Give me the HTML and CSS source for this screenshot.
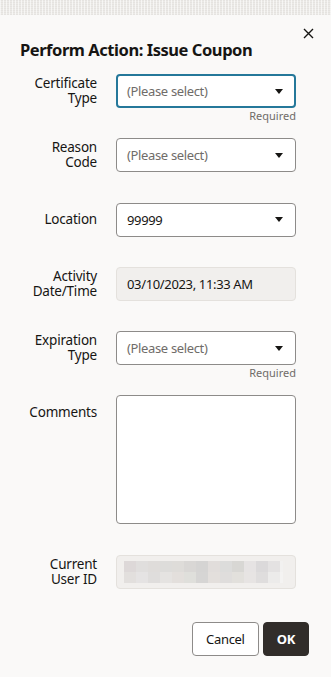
FILE: index.html
```html
<!DOCTYPE html>
<html lang="en">
<head>
<meta charset="UTF-8" />
<meta name="viewport" content="width=device-width, initial-scale=1.0"/>
<title>Perform Action: Issue Coupon</title>
<link rel="stylesheet" href="styles.css">
</head>
<body>

<div class="backdrop"></div>

<div class="dialog">
  <div class="dialog-header">
    <h1>Perform Action: Issue Coupon</h1>
    <button class="close" aria-label="Close">
      <svg width="11" height="11" viewBox="0 0 11 11"><path d="M1 1L10 10M10 1L1 10" stroke="#161513" stroke-width="1.4" fill="none"/></svg>
    </button>
  </div>

  <div class="form">
    <div class="field">
      <label class="field-label">Certificate Type</label>
      <div class="field-control">
        <div class="select focused">
          <span class="placeholder">(Please select)</span>
          <span class="caret"></span>
        </div>
        <div class="help">Required</div>
      </div>
    </div>

    <div class="field">
      <label class="field-label">Reason Code</label>
      <div class="field-control">
        <div class="select">
          <span class="placeholder">(Please select)</span>
          <span class="caret"></span>
        </div>
        <div class="help"></div>
      </div>
    </div>

    <div class="field">
      <label class="field-label">Location</label>
      <div class="field-control">
        <div class="select">
          <span class="value">99999</span>
          <span class="caret"></span>
        </div>
        <div class="help"></div>
      </div>
    </div>

    <div class="field">
      <label class="field-label">Activity Date/Time</label>
      <div class="field-control">
        <div class="readonly">
          <span class="value">03/10/2023, 11:33 AM</span>
        </div>
        <div class="help"></div>
      </div>
    </div>

    <div class="field">
      <label class="field-label">Expiration Type</label>
      <div class="field-control">
        <div class="select">
          <span class="placeholder">(Please select)</span>
          <span class="caret"></span>
        </div>
        <div class="help">Required</div>
      </div>
    </div>

    <div class="field">
      <label class="field-label">Comments</label>
      <div class="field-control">
        <textarea class="textarea"></textarea>
        <div class="help"></div>
      </div>
    </div>

    <div class="field">
      <label class="field-label">Current User ID</label>
      <div class="field-control">
        <div class="readonly">
          <span class="blurred"></span>
        </div>
      </div>
    </div>
  </div>

  <div class="actions">
    <button class="btn">Cancel</button>
    <button class="btn btn-primary">OK</button>
  </div>
</div>

</body>
</html>
```

FILE: styles.css
```css
body {
  margin: 0;
  font-family: "Noto Sans", Arial, sans-serif;
  color: #161513;
  background: #faf9f8;
}

.backdrop {
  height: 15px;
  background-color: #eceae7;
  background-image:
    repeating-linear-gradient(90deg, rgba(255,255,255,.6) 0 1px, transparent 1px 3px),
    repeating-linear-gradient(0deg, rgba(0,0,0,.03) 0 1px, transparent 1px 2px);
}

.dialog {
  background: #faf9f8;
  padding: 0 22px 0 20px;
}

.dialog-header {
  display: flex;
  justify-content: space-between;
  align-items: flex-start;
  padding-top: 12px;
}

h1 {
  margin: 11px 0 0;
  font-size: 16.5px;
  font-weight: bold;
  letter-spacing: -0.45px;
}

.close {
  border: none;
  background: none;
  padding: 0;
  margin: 1px -6px 0 0;
  width: 12px;
  height: 12px;
  display: flex;
  cursor: pointer;
}

.form {
  margin-top: 13px;
}

.field {
  display: flex;
  gap: 19px;
}

.field-label {
  width: 77px;
  min-height: 34px;
  display: flex;
  align-items: center;
  justify-content: flex-end;
  text-align: right;
  font-size: 13.5px;
  line-height: 15px;
  letter-spacing: -0.2px;
  align-self: flex-start;
}

.field-control {
  width: 180px;
}

.select,
.readonly {
  box-sizing: border-box;
  height: 34px;
  border: 1px solid #8d8b89;
  border-radius: 4px;
  background: #fff;
  display: flex;
  align-items: center;
  justify-content: space-between;
  padding: 0 12px 0 10px;
  font-size: 13px;
  letter-spacing: -0.35px;
}

.select.focused {
  border: 2px solid #25789a;
  padding-left: 9px;
  padding-right: 11px;
}

.readonly {
  background: #f1efed;
  border-color: #e4e1dd;
}

.placeholder {
  color: #6f6c69;
}

.caret {
  width: 0;
  height: 0;
  border-left: 4.5px solid transparent;
  border-right: 4.5px solid transparent;
  border-top: 5px solid #161513;
}

.help {
  height: 16px;
  margin-bottom: 14.25px;
  text-align: right;
  font-size: 11px;
  line-height: 16px;
  color: #6f6c69;
}

.textarea {
  display: block;
  box-sizing: border-box;
  width: 180px;
  height: 129px;
  border: 1px solid #8d8b89;
  border-radius: 4px;
  background: #fff;
  resize: none;
  margin: 0;
}

.blurred {
  display: block;
  width: 162px;
  height: 22px;
  margin-left: -3px;
  background:
    linear-gradient(90deg,
      #ddd8d8 0 12px, #e0dedd 12px 24px, #dfdcda 24px 36px, #dddcda 36px 48px,
      #dedcd9 48px 60px, #d9d7d5 60px 72px, #d5d4d3 72px 84px, #e1dddb 84px 96px,
      #dcdcdb 96px 108px, #d8d7d4 108px 120px, #e6e3e3 120px 132px, #dbd9da 132px 144px,
      #e4e2e2 144px 156px, #f2f1f0 156px 162px) top / 100% 11px no-repeat,
    linear-gradient(90deg,
      #e2dfdd 0 12px, #e5e3e3 12px 24px, #dfdddc 24px 36px, #e5e3e1 36px 48px,
      #e3dfdc 48px 60px, #dfdfdb 60px 72px, #d6d5d4 72px 84px, #e3dfdc 84px 96px,
      #dfdddc 96px 108px, #e2e0dc 108px 120px, #e7e4e3 120px 132px, #dfdddd 132px 144px,
      #ecebea 144px 156px, #f4f3f2 156px 162px) bottom / 100% 11px no-repeat;
}

.actions {
  display: flex;
  justify-content: flex-end;
  gap: 4px;
  margin-top: 33px;
}

.btn {
  height: 34px;
  padding: 0 13px;
  border: 1px solid #8d8b89;
  border-radius: 4px;
  background: #fff;
  color: #161513;
  font-family: inherit;
  font-size: 13px;
  letter-spacing: -0.3px;
  cursor: pointer;
}

.btn-primary {
  background: #312d2a;
  border-color: #312d2a;
  color: #fff;
  font-weight: bold;
  padding: 0 13px;
}
```
